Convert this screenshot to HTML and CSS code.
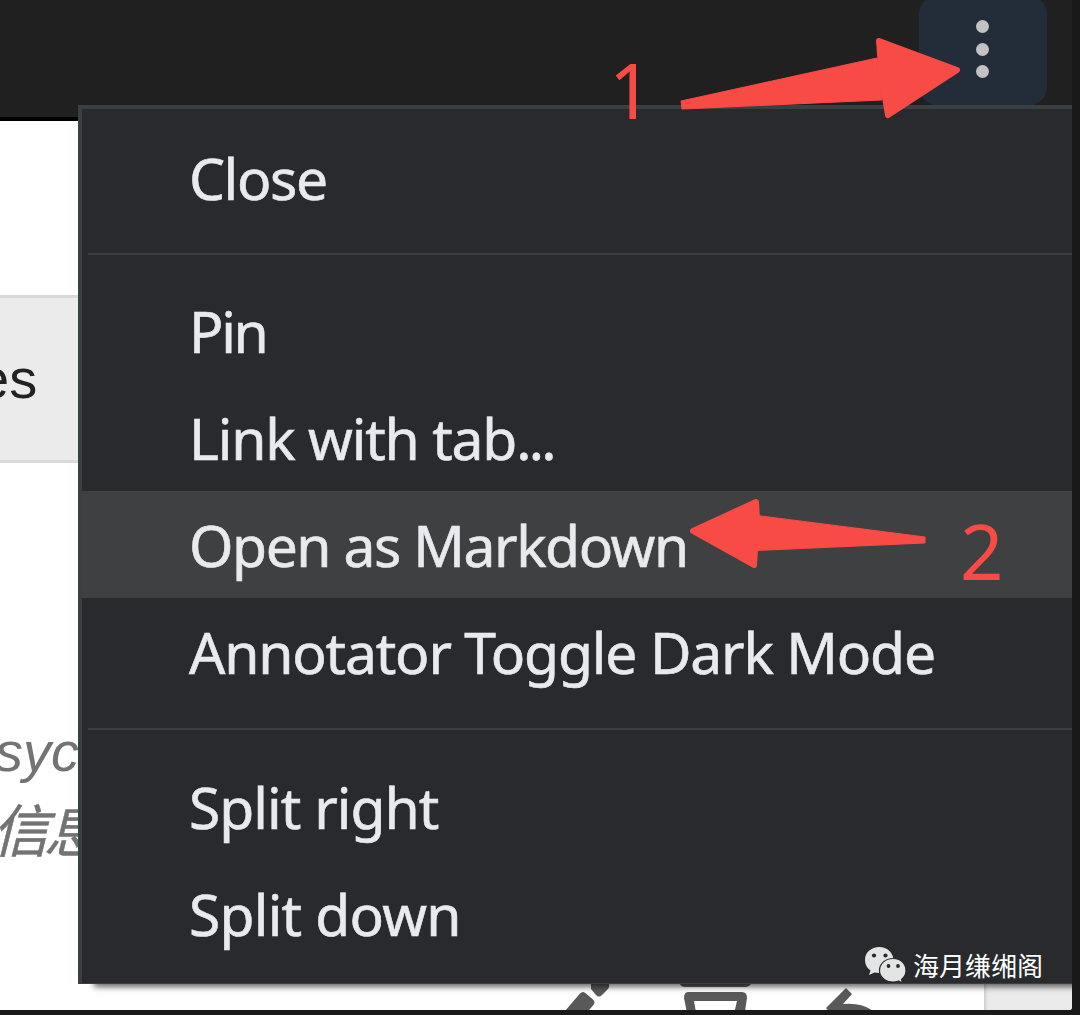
FILE: index.html
```html
<!DOCTYPE html>
<html lang="en">
<head>
<meta charset="utf-8">
<title>Pane menu</title>
<link rel="stylesheet" href="styles.css">
</head>
<body>
<div class="window">
  <header class="titlebar">
    <button class="more" aria-label="More options"><i></i><i></i><i></i></button>
  </header>
  <main class="document">
    <div class="band"><span>es</span></div>
    <div class="excerpt"><p class="latin">syc</p><p class="cjk">信息</p></div>
    <div class="toolbar">
      <svg class="tools" viewBox="0 0 420 34" width="420" height="34">
        <g fill="#595959">
          <path d="M-5 34 L16 9.500 Q19 6.500 22 9.500 L29 15.500 Q32 18.500 29 21.500 L18 34Z"/>
          <path d="M27 0 L45 0 Q46 3 43 6 L38 11 Q35 14 32 11 L27 5Z"/>
          <path d="M116 0 H187 Q185 3 182 3 H121 Q117 3 116 0Z"/>
          <path d="M124 8 H178 Q183 8 183 14 L180 34 H169 L173 17 H130 L133 34 H124 L120 14 Q120 8 124 8Z"/>
          <path d="M282 4 L288 10 L279 20 Q297 18 309 27 L309 34 H270 L262 24Z"/>
        </g>
      </svg>
      <div class="side"></div>
    </div>
  </main>
</div>

<nav class="menu">
  <a class="item close">Close</a>
  <hr>
  <a class="item pin">Pin</a>
  <a class="item link">Link with tab<span class="dots">...</span></a>
  <a class="item open active">Open as Markdown</a>
  <a class="item dark">Annotator Toggle Dark Mode</a>
  <hr>
  <a class="item right">Split right</a>
  <a class="item down">Split down</a>
</nav>

<svg class="arrows" viewBox="0 0 1080 1015" width="1080" height="1015">
  <g fill="#f84b46" stroke="#f84b46" stroke-linejoin="round">
    <path stroke-width="1" d="M681 101 L877 58 L882 100 L682 109Z"/>
    <path stroke-width="6" d="M879 41 L957 70 L888 115 L882 80Z"/>
    <path stroke-width="1" d="M757 515.500 L925 537 V543 L757 550.500Z"/>
    <path stroke-width="6" d="M693 531 L756 502 L757 520 L754 565Z"/>
  </g>
</svg>
<span class="step one">1</span>
<span class="step two">2</span>

<div class="watermark">
  <svg viewBox="0 0 42 37" width="42" height="37">
    <g fill="#e3e5e4">
      <path d="M15.500 1 C7 1 1 6.500 1 14 C1 18.500 3 22 6.500 24.500 L5 29 L10.500 26.500 C23 29 29.500 21 29.500 13 C28.500 6 23 1 15.500 1Z"/>
      <path stroke="#292a2d" stroke-width="1.200" d="M29 12.500 C21.500 12.500 15.500 17.500 15.500 24.500 C15.500 31 21.500 36 29 36 Q32 36 34.500 35 L38.500 37 L37.500 33.500 C40 31.500 42 28.500 42 24.500 C42 17.500 36.500 12.500 29 12.500Z"/>
    </g>
    <g fill="#292a2d"><circle cx="10" cy="9.500" r="2.100"/><circle cx="21.500" cy="9.500" r="2.100"/><circle cx="24.500" cy="20" r="1.900"/><circle cx="34" cy="20" r="1.900"/></g>
  </svg>
  <span>海月缣缃阁</span>
</div>
</body>
</html>
```
FILE: styles.css
```css
* { box-sizing: border-box; }
body {
  margin: 0;
  width: 1080px;
  height: 1015px;
  position: relative;
  overflow: hidden;
  background: #191919;
  font-family: "Noto Sans", "Open Sans", sans-serif;
}
.window {
  width: 1072px;
  height: 1010px;
  display: flex;
  flex-direction: column;
  overflow: hidden;
  border-bottom-right-radius: 3px;
}
.titlebar {
  height: 121px;
  flex: none;
  display: flex;
  justify-content: flex-end;
  padding-right: 25px;
  background: #202020;
  border-bottom: 4px solid #000;
}
.more {
  width: 128px;
  height: 109px;
  margin-top: -4px;
  padding: 0 1px 3px 0;
  border: 0;
  border-radius: 18px;
  background: #222d39;
  display: flex;
  flex-direction: column;
  align-items: center;
  justify-content: center;
  gap: 9.500px;
}
.more i {
  width: 13px;
  height: 13px;
  border-radius: 50%;
  background: #c2c2c2;
}
.document {
  flex: 1;
  display: flex;
  flex-direction: column;
  background: #fff;
}
.band {
  width: 100%;
  height: 168px;
  margin-top: 174px;
  border: solid #dadada;
  border-width: 3px 0;
  background: #ebebeb;
  font: 56px/161px "Liberation Sans", sans-serif;
  color: #222;
}
.band span { display: block; margin-left: -22px; }
.excerpt {
  flex: 1;
  padding-top: 251px;
  color: #737373;
  white-space: nowrap;
}
.excerpt p { margin: 0; }
.excerpt .latin {
  margin-left: -5px;
  font: italic 56px/76px "Liberation Sans", sans-serif;
}
.excerpt .cjk {
  margin: -5px 0 0 -8px;
  font: italic 57px/84px "Noto Sans CJK SC", sans-serif;
  letter-spacing: -5px;
  -webkit-text-stroke: .5px;
}
.toolbar {
  height: 26px;
  flex: none;
  display: flex;
  justify-content: space-between;
  padding-left: 564px;
}
.tools { flex: none; overflow: visible; }
.side {
  width: 88px;
  background: #ebebeb;
  box-shadow: inset 4px 0 3px -2px #ccc;
}
.menu {
  position: absolute;
  left: 78px;
  top: 105px;
  width: 994px;
  height: 879px;
  padding: 15px 0 0;
  border: solid #3a3f42;
  border-width: 4px 0 1px 4px;
  background: #292a2d;
  box-shadow: 14px 5px 6px -2px rgba(0, 0, 0, .6);
  clip-path: inset(0 0 -16px 0);
}
.item {
  display: block;
  height: 107px;
  padding-left: 107px;
  font-size: 57px;
  line-height: 109px;
  color: #e8eaed;
  white-space: pre;
  -webkit-text-stroke: .6px;
}
.close { letter-spacing: -1.400px; }
.pin { letter-spacing: -2.300px; }
.link { letter-spacing: -1.200px; }
.dots { letter-spacing: -2.700px; }
.open { letter-spacing: -1.450px; }
.dark { letter-spacing: -1.200px; }
.right { letter-spacing: -1px; }
.down { letter-spacing: -.800px; }
.active { background: #3f4042; }
.menu hr {
  height: 2px;
  margin: 22px 0 22px 6px;
  border: 0;
  background: #3a3e41;
}
.menu .dark + hr { margin: 23px 0 23px 6px; }
.arrows { position: absolute; left: 0; top: 0; }
.step {
  position: absolute;
  font-size: 76px;
  line-height: 100px;
  color: #f84b46;
}
.one { left: 609px; top: 40px; }
.two { left: 960px; top: 501px; }
.watermark {
  position: absolute;
  left: 864px;
  top: 946px;
  display: flex;
  gap: 7px;
  font: 26px/38px "Noto Sans CJK SC", sans-serif;
  color: #fff;
}
```
